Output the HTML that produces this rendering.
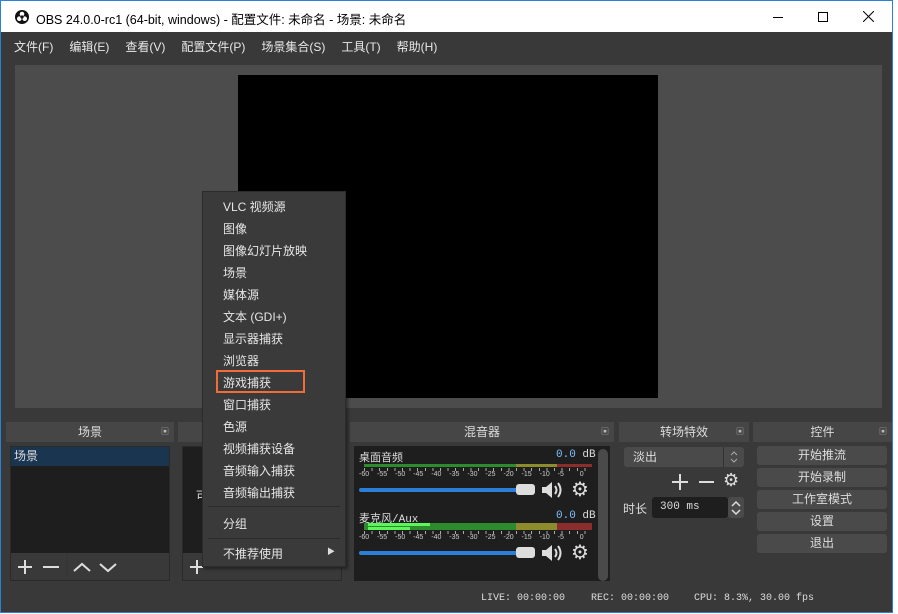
<!DOCTYPE html>
<html><head><meta charset="utf-8"><style>
*{margin:0;padding:0;box-sizing:border-box}
body{width:898px;height:614px;background:#fff;position:relative;overflow:hidden;font-family:"Liberation Sans","Noto Sans CJK SC",sans-serif;font-size:12px;color:#ddd}
.a{position:absolute}
.win{left:0;top:0;width:893px;height:613px;border:1px solid #2b80d8;background:#393939}
.title{left:1px;top:1px;width:891px;height:31px;background:#fff;color:#000}
.menu span{margin-right:16px}
.hdr{background:#464646;height:20px;text-align:center;line-height:20px;color:#ddd}
.hdr i{position:absolute;right:5px;top:0;font-style:normal;font-size:8px;color:#bbb}
.cm div{position:absolute;left:20px;color:#e6e6e6}
.btn{background:#4a4a4a;border-radius:3px;text-align:center;line-height:19px;height:19px}
.mono{font-family:"Liberation Mono","Noto Sans CJK SC",monospace}
.tk{font-size:7px;color:#ccc;font-family:"Liberation Sans",sans-serif}
</style></head><body>
<div class="a win"></div>
<div class="a title">
 <svg class="a" style="left:14px;top:9px" width="14" height="14" viewBox="0 0 14 14"><circle cx="7" cy="7" r="7" fill="#111"/><circle cx="7" cy="4" r="2.3" fill="#fff"/><circle cx="4.3" cy="8.7" r="2.3" fill="#fff"/><circle cx="9.7" cy="8.7" r="2.3" fill="#fff"/><circle cx="7" cy="7" r="1.6" fill="#111"/></svg>
 <div class="a" style="left:35px;top:8px;font-size:12.5px">OBS 24.0.0-rc1 (64-bit, windows) - 配置文件: 未命名 - 场景: 未命名</div>
 <div class="a" style="left:772px;top:16px;width:10px;height:1px;background:#000"></div>
 <div class="a" style="left:817px;top:11px;width:10px;height:10px;border:1px solid #000"></div>
 <svg class="a" style="left:862px;top:10px" width="11" height="11"><path d="M0 0L11 11M11 0L0 11" stroke="#000" stroke-width="1"/></svg>
</div>
<div class="a menu" style="left:14px;top:38px;color:#e8e8e8;font-size:12px;white-space:nowrap"><span>文件(F)</span><span>编辑(E)</span><span>查看(V)</span><span>配置文件(P)</span><span>场景集合(S)</span><span>工具(T)</span><span>帮助(H)</span></div>
<div class="a" style="left:15px;top:65px;width:867px;height:343px;background:#4c4c4c"></div>
<div class="a" style="left:238px;top:75px;width:420px;height:323px;background:#000"></div>

<!-- scenes -->
<div class="a hdr" style="left:6px;top:422px;width:168px">场景<i>▣</i></div>
<div class="a" style="left:10px;top:446px;width:160px;height:135px;border:1px solid #2a2a2a;background:#1e1e1e"></div>
<div class="a" style="left:11px;top:447px;width:158px;height:19px;background:#1a3550;padding-left:3px;line-height:19px">场景</div>
<div class="a" style="left:11px;top:553px;width:158px;height:27px;background:#393939"></div>
<svg class="a" style="left:11px;top:553px" width="158" height="27"><g stroke="#ddd" stroke-width="2" fill="none"><path d="M14 7V21M7 14H21M32 14H48"/><path d="M63 18L71 11L79 18M89 11L97 18L105 11"/></g><path d="M56 4V23" stroke="#333"/></svg>
<!-- sources -->
<div class="a hdr" style="left:178px;top:422px;width:168px"></div>
<div class="a" style="left:182px;top:446px;width:160px;height:135px;border:1px solid #2a2a2a;background:#1e1e1e"></div>
<div class="a" style="left:196px;top:487px">可</div>
<div class="a" style="left:183px;top:553px;width:158px;height:27px;background:#393939"></div>
<svg class="a" style="left:183px;top:553px" width="20" height="27"><path d="M14 7V21M7 14H21" stroke="#ddd" stroke-width="2"/></svg>
<!-- mixer -->
<div class="a hdr" style="left:350px;top:422px;width:264px">混音器<i>▣</i></div>
<div class="a" style="left:354px;top:446px;width:256px;height:135px;background:#1e1e1e"></div>
<div class="a" style="left:598px;top:449px;width:10px;height:132px;background:#4a4a4a;border-radius:5px"></div>
<div class="a mono" style="left:359px;top:449px;font-size:11px">桌面音频</div>
<div class="a mono" style="left:556px;top:449px;font-size:11px;color:#7cc1ff">0.0 <span style="color:#ddd">dB</span></div>
<div class="a" style="left:364px;top:464px;width:152px;height:3px;background:#2d8a2d"></div>
<div class="a" style="left:516px;top:464px;width:41px;height:3px;background:#8c8c2d"></div>
<div class="a" style="left:557px;top:464px;width:35px;height:3px;background:#8c2d2d"></div>
<div class="a" style="left:364px;top:468px;width:228px;height:3px;background:repeating-linear-gradient(90deg,#aaa 0 1px,transparent 1px 7.6px)"></div>
<div class="a tk" style="left:359px;top:471px;word-spacing:6px;white-space:nowrap">-60 -55 -50 -45 -40 -35 -30 -25 -20 -15 -10 -5 &nbsp;0</div>
<div class="a" style="left:359px;top:488px;width:160px;height:4px;background:#2b7fd8;border-radius:2px"></div>
<div class="a" style="left:516px;top:484px;width:19px;height:11px;background:#ddd;border-radius:3px"></div>
<svg class="a" style="left:540px;top:480px" width="22" height="20"><path d="M2 7H6L12 2V18L6 13H2Z" fill="#ddd"/><path d="M15 6Q18 10 15 14M18 3Q23 10 18 17" stroke="#ddd" stroke-width="2" fill="none"/></svg>
<div class="a" style="left:571px;top:477px;font-size:20px;color:#ddd">⚙</div>

<div class="a mono" style="left:359px;top:510px;font-size:11px">麦克风/Aux</div>
<div class="a mono" style="left:556px;top:510px;font-size:11px;color:#7cc1ff">0.0 <span style="color:#ddd">dB</span></div>
<div class="a" style="left:364px;top:523px;width:152px;height:7px;background:#2d8a2d"></div>
<div class="a" style="left:368px;top:523px;width:62px;height:3px;background:#5cf55c"></div>
<div class="a" style="left:368px;top:527px;width:42px;height:3px;background:#5cf55c"></div>
<div class="a" style="left:516px;top:523px;width:41px;height:7px;background:#8c8c2d"></div>
<div class="a" style="left:557px;top:523px;width:35px;height:7px;background:#8c2d2d"></div>
<div class="a" style="left:364px;top:531px;width:228px;height:3px;background:repeating-linear-gradient(90deg,#aaa 0 1px,transparent 1px 7.6px)"></div>
<div class="a tk" style="left:359px;top:534px;word-spacing:6px;white-space:nowrap">-60 -55 -50 -45 -40 -35 -30 -25 -20 -15 -10 -5 &nbsp;0</div>
<div class="a" style="left:359px;top:551px;width:160px;height:4px;background:#2b7fd8;border-radius:2px"></div>
<div class="a" style="left:516px;top:547px;width:19px;height:11px;background:#ddd;border-radius:3px"></div>
<svg class="a" style="left:540px;top:543px" width="22" height="20"><path d="M2 7H6L12 2V18L6 13H2Z" fill="#ddd"/><path d="M15 6Q18 10 15 14M18 3Q23 10 18 17" stroke="#ddd" stroke-width="2" fill="none"/></svg>
<div class="a" style="left:571px;top:540px;font-size:20px;color:#ddd">⚙</div>

<!-- transitions -->
<div class="a hdr" style="left:619px;top:422px;width:130px">转场特效<i>▣</i></div>
<div class="a" style="left:624px;top:447px;width:120px;height:20px;background:#4a4a4a;border-radius:3px;line-height:20px;padding-left:9px">淡出</div>
<div class="a" style="left:723px;top:447px;width:1px;height:20px;background:#333"></div>
<svg class="a" style="left:729px;top:450px" width="10" height="14"><path d="M2 5L5 2L8 5M2 9L5 12L8 9" stroke="#aaa" fill="none"/></svg>
<svg class="a" style="left:670px;top:472px" width="70" height="20"><path d="M10 2V18M2 10H18M29 10H44" stroke="#ddd" stroke-width="2"/></svg>
<div class="a" style="left:723px;top:470px;font-size:18px">⚙</div>
<div class="a" style="left:623px;top:500px">时长</div>
<div class="a mono" style="left:652px;top:497px;width:76px;height:21px;background:#1e1e1e;border-radius:3px;line-height:21px;padding-left:8px;font-size:11px">300 ms</div>
<div class="a" style="left:728px;top:497px;width:16px;height:21px;background:#4a4a4a;border-radius:3px"></div>
<svg class="a" style="left:730px;top:499px" width="12" height="18"><path d="M2 7L6 3L10 7M2 11L6 15L10 11" stroke="#ddd" stroke-width="1.5" fill="none"/></svg>
<!-- controls -->
<div class="a hdr" style="left:753px;top:422px;width:139px">控件<i>▣</i></div>
<div class="a btn" style="left:757px;top:446px;width:130px">开始推流</div>
<div class="a btn" style="left:757px;top:468px;width:130px">开始录制</div>
<div class="a btn" style="left:757px;top:490px;width:130px">工作室模式</div>
<div class="a btn" style="left:757px;top:512px;width:130px">设置</div>
<div class="a btn" style="left:757px;top:534px;width:130px">退出</div>
<!-- status -->
<div class="a mono" style="left:481px;top:593px;font-size:10px;white-space:pre">LIVE: 00:00:00</div>
<div class="a mono" style="left:591px;top:593px;font-size:10px;white-space:pre">REC: 00:00:00</div>
<div class="a mono" style="left:694px;top:593px;font-size:10px;white-space:pre">CPU: 8.3%, 30.00 fps</div>

<!-- context menu -->
<div class="a cm" style="left:202px;top:191px;width:144px;height:376px;background:#3a3a3a;border:1px solid #2c2c2c;box-shadow:2px 2px 3px rgba(0,0,0,.4)">
 <div style="top:6px">VLC 视频源</div>
 <div style="top:28px">图像</div>
 <div style="top:50px">图像幻灯片放映</div>
 <div style="top:72px">场景</div>
 <div style="top:94px">媒体源</div>
 <div style="top:116px">文本 (GDI+)</div>
 <div style="top:138px">显示器捕获</div>
 <div style="top:160px">浏览器</div>
 <div style="top:182px">游戏捕获</div>
 <div style="top:204px">窗口捕获</div>
 <div style="top:226px">色源</div>
 <div style="top:248px">视频捕获设备</div>
 <div style="top:270px">音频输入捕获</div>
 <div style="top:292px">音频输出捕获</div>
 <span class="a" style="left:5px;top:314px;width:132px;height:1px;background:#2a2a2a"></span>
 <div style="top:323px">分组</div>
 <span class="a" style="left:5px;top:346px;width:132px;height:1px;background:#2a2a2a"></span>
 <div style="top:353px">不推荐使用</div>
 <span class="a" style="left:124px;top:354px;font-size:8px;color:#ddd">▶</span>
 <span class="a" style="left:13px;top:178px;width:89px;height:23px;border:2px solid #f26b3a"></span>
</div>
</body></html>
